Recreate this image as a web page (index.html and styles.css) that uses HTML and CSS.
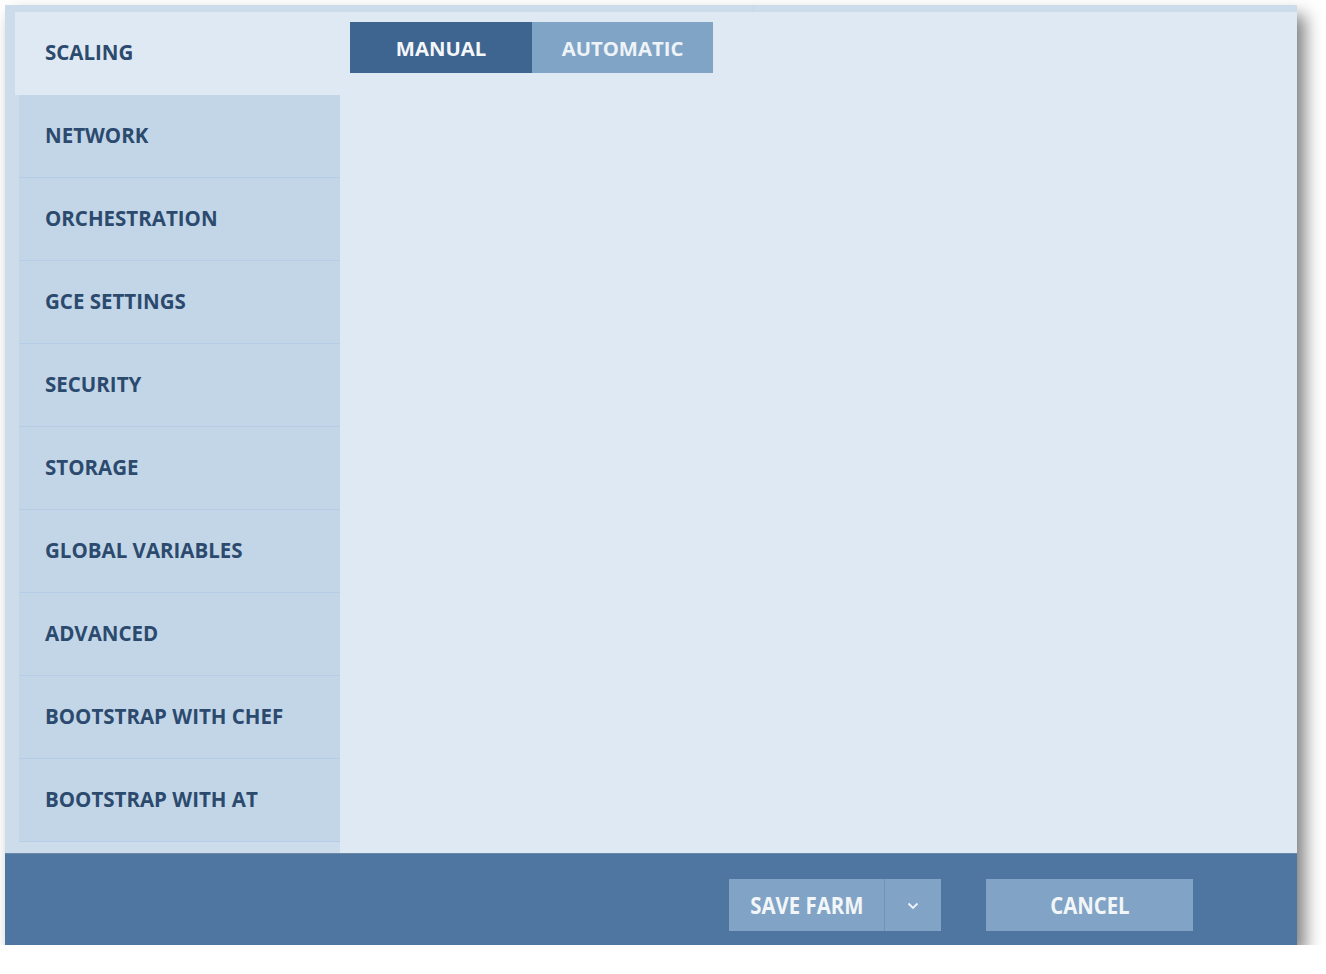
FILE: index.html
```html
<!DOCTYPE html>
<html>
<head>
<meta charset="utf-8">
<link rel="stylesheet" href="styles.css">
</head>
<body>
<div class="panel">
  <div class="top-strip"><span class="strip-a"></span><span class="strip-b"></span></div>
  <div class="panel-body">
    <nav class="sidebar">
      <div class="nav-item active">SCALING</div>
      <div class="nav-item">NETWORK</div>
      <div class="nav-item">ORCHESTRATION</div>
      <div class="nav-item">GCE SETTINGS</div>
      <div class="nav-item">SECURITY</div>
      <div class="nav-item">STORAGE</div>
      <div class="nav-item">GLOBAL VARIABLES</div>
      <div class="nav-item">ADVANCED</div>
      <div class="nav-item">BOOTSTRAP WITH CHEF</div>
      <div class="nav-item">BOOTSTRAP WITH AT</div>
    </nav>
    <main class="content">
      <div class="tabs">
        <div class="tab tab-active">MANUAL</div>
        <div class="tab">AUTOMATIC</div>
      </div>
    </main>
  </div>
  <footer class="footer">
    <div class="split-btn">
      <span class="btn-main"><span class="btn-label">SAVE FARM</span></span>
      <span class="btn-caret">
        <svg width="12" height="8" viewBox="0 0 12 8"><path d="M1.5 1.5 L6 6 L10.5 1.5" fill="none" stroke="#eef3f8" stroke-width="1.8"/></svg>
      </span>
    </div>
    <div class="btn cancel"><span class="btn-label">CANCEL</span></div>
  </footer>
</div>
</body>
</html>
```
FILE: styles.css
```css
html, body {
  margin: 0;
  padding: 0;
  background: #ffffff;
}
body {
  font-family: "Open Sans", "Liberation Sans", sans-serif;
}
.panel {
  margin: 5px 0 0 5px;
  width: 1292px;
  height: 940px;
  display: flex;
  flex-direction: column;
  background: #dfe9f3;
  box-shadow: 8px 10px 16px rgba(0, 0, 0, 0.5);
}
.top-strip {
  height: 7px;
  display: flex;
  background: #cddcea;
}
.strip-a {
  width: 748px;
  border-right: 1px solid #c4d5e6;
}
.strip-b {
  flex: 1;
}
.panel-body {
  flex: 1;
  display: flex;
  min-height: 0;
}
.sidebar {
  width: 335px;
  box-sizing: border-box;
  padding-left: 14px;
  background: #cddcea;
  display: flex;
  flex-direction: column;
}
.nav-item {
  height: 83px;
  box-sizing: border-box;
  display: flex;
  align-items: center;
  padding-left: 26px;
  padding-bottom: 3px;
  background: #c3d6e8;
  border-bottom: 1px solid #b5cde5;
  color: #2c4a6e;
  font-weight: 700;
  font-size: 20.5px;
}
.nav-item.active {
  margin-left: -4px;
  padding-left: 30px;
  background: #dfe9f3;
  border-bottom: none;
}
.content {
  flex: 1;
  background: #dfe9f3;
  padding: 10px 0 0 10px;
}
.tabs {
  display: flex;
}
.tab {
  width: 181px;
  height: 51px;
  display: flex;
  align-items: center;
  justify-content: center;
  padding-top: 1px;
  box-sizing: border-box;
  background: #80a4c6;
  color: #eef3f8;
  font-weight: 700;
  font-size: 20.3px;
}
.tab-active {
  width: 182px;
  background: #3e6490;
  color: #f4f7fa;
}
.footer {
  height: 92px;
  box-sizing: border-box;
  background: #4f76a0;
  border-top: 1px solid #6a88a8;
  display: flex;
  align-items: flex-start;
  justify-content: flex-end;
  padding-right: 104px;
  padding-top: 25px;
  gap: 45px;
}
.split-btn {
  display: flex;
  height: 52px;
  background: #81a4c6;
}
.btn-main {
  width: 155px;
  display: flex;
  align-items: center;
  justify-content: center;
  border-right: 1px solid #7094b8;
}
.btn-caret {
  width: 56px;
  display: flex;
  align-items: center;
  justify-content: center;
  padding-top: 2px;
}
.btn {
  height: 52px;
  width: 207px;
  display: flex;
  align-items: center;
  justify-content: center;
  background: #81a4c6;
}
.btn-label {
  display: inline-block;
  color: #f2f6f9;
  font-weight: 700;
  font-size: 23px;
  transform: scaleX(0.885);
}
```
